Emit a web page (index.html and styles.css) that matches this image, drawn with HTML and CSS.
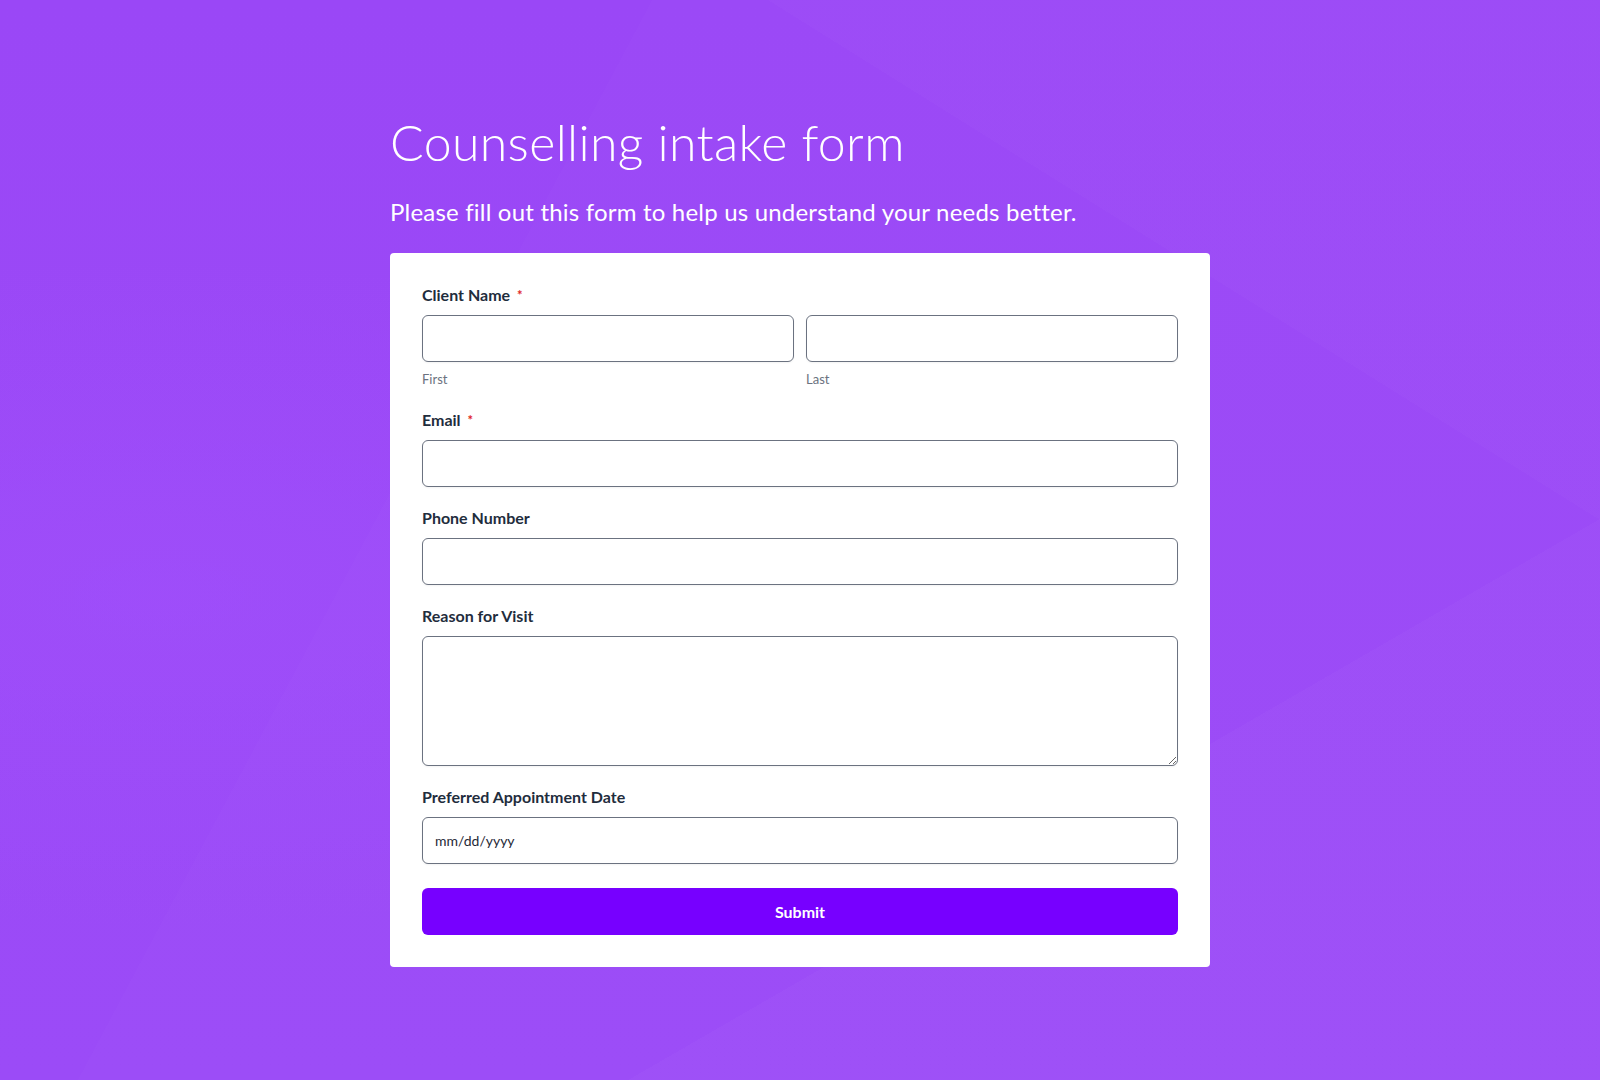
FILE: index.html
```html
<!DOCTYPE html>
<html lang="en">
<head>
<meta charset="utf-8">
<title>Counselling intake form</title>
<link rel="stylesheet" href="styles.css">
</head>
<body>
<div class="bg"></div>
<main class="page">
  <header class="intro">
    <h1 class="title">Counselling intake form</h1>
    <p class="subtitle">Please fill out this form to help us understand your needs better.</p>
  </header>
  <form class="card">
    <div class="field">
      <label class="label">Client Name <span class="req">*</span></label>
      <div class="name-row">
        <div class="name-col">
          <input class="input" type="text">
          <span class="sublabel">First</span>
        </div>
        <div class="name-col">
          <input class="input" type="text">
          <span class="sublabel">Last</span>
        </div>
      </div>
    </div>
    <div class="field">
      <label class="label">Email <span class="req">*</span></label>
      <input class="input" type="email">
    </div>
    <div class="field">
      <label class="label">Phone Number</label>
      <input class="input" type="tel">
    </div>
    <div class="field">
      <label class="label">Reason for Visit</label>
      <textarea class="input textarea"></textarea>
    </div>
    <div class="field">
      <label class="label">Preferred Appointment Date</label>
      <input class="input date" type="text" placeholder="mm/dd/yyyy">
    </div>
    <button class="submit" type="button">Submit</button>
  </form>
</main>
</body>
</html>
```

FILE: styles.css
```css
* { box-sizing: border-box; }
html, body { margin: 0; padding: 0; }
body {
  min-height: 1080px;
  font-family: Lato, "Open Sans", sans-serif;
  background: #9a48f6;
  position: relative;
  overflow: hidden;
}
.bg {
  position: absolute;
  inset: 0;
  background:
    linear-gradient(118deg, rgba(255,255,255,0) 0 30%, rgba(255,255,255,0.012) 30% 100%),
    linear-gradient(32deg, rgba(255,255,255,0) 0 75%, rgba(255,255,255,0.015) 75% 100%),
    linear-gradient(150deg, rgba(255,255,255,0) 0 72%, rgba(255,255,255,0.02) 72% 100%),
    radial-gradient(ellipse at 10% 55%, rgba(165,85,255,0.35), rgba(165,85,255,0) 40%),
    linear-gradient(180deg, #9a47f6 0%, #9b4bf7 100%);
  z-index: 0;
}
.page {
  position: relative;
  z-index: 1;
  width: 820px;
  margin: 0 auto;
  padding-top: 112px;
}
.title {
  margin: 0;
  color: #fff;
  font-weight: 300;
  font-size: 50px;
  line-height: 60px;
  letter-spacing: 0.35px;
}
.subtitle {
  margin: 24px 0 0;
  color: #fff;
  font-weight: 400;
  font-size: 24px;
  line-height: 32px;
  letter-spacing: 0.2px;
}
.card {
  margin-top: 25px;
  background: #fff;
  border-radius: 4px;
  padding: 30px 32px 32px;
  display: flex;
  flex-direction: column;
}
.field {
  display: flex;
  flex-direction: column;
  margin-bottom: 19px;
}
.field:first-child { margin-bottom: 20px; }
.field:last-of-type { margin-bottom: 24px; }
.label {
  font-size: 16px;
  line-height: 24px;
  font-weight: 700;
  color: #1f2d3d;
  margin-bottom: 8px;
}
.req {
  color: #e02424;
  font-size: 13px;
  margin-left: 3px;
  vertical-align: 1px;
}
.name-row {
  display: grid;
  grid-template-columns: 1fr 1fr;
  gap: 12px;
}
.name-col {
  display: flex;
  flex-direction: column;
}
.sublabel {
  margin-top: 8px;
  font-size: 13px;
  line-height: 18px;
  color: #6b7280;
}
.input {
  display: block;
  width: 100%;
  height: 47px;
  border: 1px solid #6b7280;
  border-radius: 6px;
  background: #fff;
  font-family: Lato, sans-serif;
  font-size: 14px;
  padding: 0 12px;
  color: #1f2937;
  box-shadow: 0 1px 2px rgba(0,0,0,0.05);
}
.textarea {
  height: 130px;
  resize: vertical;
  padding: 10px 12px;
}
.date::placeholder {
  color: #1f2937;
  opacity: 1;
}
.submit {
  height: 47px;
  border: none;
  border-radius: 6px;
  background: #7700ff;
  color: #fff;
  font-family: Lato, sans-serif;
  font-size: 16px;
  font-weight: 700;
  cursor: pointer;
}
```
